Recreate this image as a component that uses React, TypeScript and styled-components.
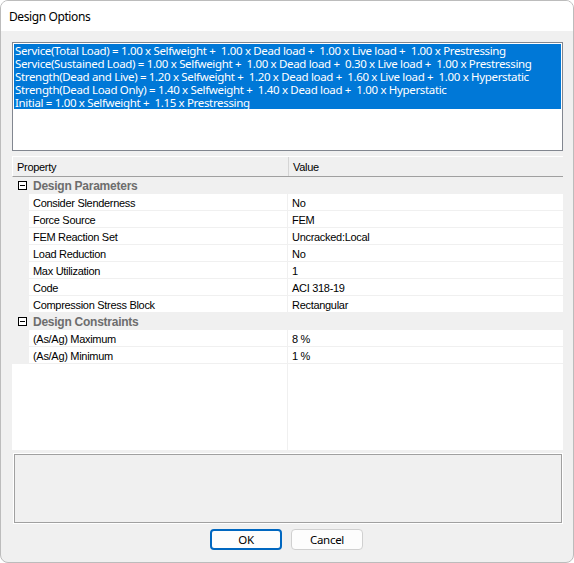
import React from "react";
import styled, { createGlobalStyle } from "styled-components";

const GlobalStyle = createGlobalStyle`
  html, body {
    margin: 0;
    padding: 0;
    background: #ffffff;
  }
  * {
    box-sizing: border-box;
  }
`;

const combos = [
  "Service(Total Load) = 1.00 x Selfweight +  1.00 x Dead load +  1.00 x Live load +  1.00 x Prestressing",
  "Service(Sustained Load) = 1.00 x Selfweight +  1.00 x Dead load +  0.30 x Live load +  1.00 x Prestressing",
  "Strength(Dead and Live) = 1.20 x Selfweight +  1.20 x Dead load +  1.60 x Live load +  1.00 x Hyperstatic",
  "Strength(Dead Load Only) = 1.40 x Selfweight +  1.40 x Dead load +  1.00 x Hyperstatic",
  "Initial = 1.00 x Selfweight +  1.15 x Prestressing",
];

const groups = [
  {
    title: "Design Parameters",
    props: [
      ["Consider Slenderness", "No"],
      ["Force Source", "FEM"],
      ["FEM Reaction Set", "Uncracked:Local"],
      ["Load Reduction", "No"],
      ["Max Utilization", "1"],
      ["Code", "ACI 318-19"],
      ["Compression Stress Block", "Rectangular"],
    ],
  },
  {
    title: "Design Constraints",
    props: [
      ["(As/Ag) Maximum", "8 %"],
      ["(As/Ag) Minimum", "1 %"],
    ],
  },
];

const Window = styled.div`
  width: 574px;
  height: 563px;
  border: 1px solid #bcbcbc;
  border-radius: 8px;
  overflow: hidden;
  background: #f0f0f0;
  display: flex;
  flex-direction: column;
  font-family: "Noto Sans", "Open Sans", sans-serif;
`;

const TitleBar = styled.div`
  height: 30px;
  flex: none;
  background: #ffffff;
  display: flex;
  align-items: center;
  padding-left: 8px;
  font-size: 12px;
  letter-spacing: -0.4px;
  color: #000;
`;

const Body = styled.div`
  flex: 1;
  display: flex;
  flex-direction: column;
  padding: 11px 10px 0 11px;
`;

const ListBox = styled.div`
  height: 109px;
  flex: none;
  border: 1px solid #828790;
  background: #ffffff;
  padding: 1px;
  overflow: hidden;
`;

const ListItem = styled.div<{ $selected?: boolean }>`
  height: 13px;
  line-height: 13px;
  padding-left: 1px;
  font-size: 11.5px;
  letter-spacing: -0.34px;
  white-space: pre;
  background: ${(p) => (p.$selected ? "#0078d7" : "transparent")};
  color: ${(p) => (p.$selected ? "#ffffff" : "#000000")};
`;

const Grid = styled.div`
  margin-top: 5px;
  height: 294px;
  flex: none;
  border-top: 1px solid #ffffff;
  background: #ffffff;
  display: flex;
  flex-direction: column;
  font-family: "Liberation Sans", Arial, sans-serif;
  font-size: 11px;
  letter-spacing: -0.3px;
  color: #000;
`;

const HeaderRow = styled.div`
  height: 20px;
  flex: none;
  display: grid;
  grid-template-columns: 276px 1fr;
  background: #f0f0f0;
  border-bottom: 1px solid #a0a0a0;
  border-left: 1px solid #ffffff;
`;

const HeaderCell = styled.div<{ $first?: boolean }>`
  display: flex;
  align-items: center;
  padding-left: 4px;
  border-right: ${(p) => (p.$first ? "1px solid #d5d5d5" : "none")};
`;

const CategoryRow = styled.div`
  height: 17px;
  flex: none;
  display: flex;
  align-items: center;
  background: #f0f0f0;
`;

const Expander = styled.div`
  width: 17px;
  height: 100%;
  display: flex;
  align-items: center;
  justify-content: center;
  padding-left: 3px;
`;

const CategoryTitle = styled.div`
  padding-left: 4px;
  font-weight: bold;
  font-size: 12px;
  letter-spacing: -0.25px;
  color: #6d6d6d;
`;

const PropRow = styled.div`
  height: 17px;
  flex: none;
  display: grid;
  grid-template-columns: 17px 259px 1fr;
`;

const Gutter = styled.div`
  background: #f0f0f0;
`;

const Cell = styled.div<{ $label?: boolean }>`
  display: flex;
  align-items: center;
  padding-left: 4px;
  padding-top: 1px;
  border-bottom: 1px solid #f0f0f0;
  border-right: ${(p) => (p.$label ? "1px solid #f0f0f0" : "none")};
  white-space: nowrap;
`;

const Filler = styled.div`
  flex: 1;
  display: grid;
  grid-template-columns: 276px 1fr;
`;

const FillerCol = styled.div`
  border-right: 1px solid #f0f0f0;
`;

const Description = styled.div`
  margin: 4px 1px 0 2px;
  height: 69px;
  flex: none;
  border: 1px solid #a0a0a0;
  box-shadow: 0 0 0 1px #ffffff;
  background: #f0f0f0;
`;

const ButtonBar = styled.div`
  display: flex;
  justify-content: center;
  gap: 9px;
  margin-top: 6px;
  padding-right: 2px;
`;

const Button = styled.button<{ $default?: boolean }>`
  width: 72px;
  height: 21px;
  padding: 0;
  border-radius: 4px;
  background: #fdfdfd;
  border: ${(p) => (p.$default ? "2px solid #0067c0" : "1px solid #d0d0d0")};
  font-family: "Noto Sans", "Open Sans", sans-serif;
  font-size: 11.5px;
  letter-spacing: -0.3px;
  color: #000;
  line-height: 1;
`;

const MinusBox = () => (
  <svg width="9" height="9" viewBox="0 0 9 9">
    <rect x="0.5" y="0.5" width="8" height="8" fill="#fff" stroke="#000" />
    <line x1="2" y1="4.5" x2="7" y2="4.5" stroke="#000" />
  </svg>
);

const App = () => {
  return (
    <>
      <GlobalStyle />
      <Window>
        <TitleBar>Design Options</TitleBar>
        <Body>
          <ListBox>
            {combos.map((c) => (
              <ListItem key={c} $selected>
                {c}
              </ListItem>
            ))}
          </ListBox>
          <Grid>
            <HeaderRow>
              <HeaderCell $first>Property</HeaderCell>
              <HeaderCell>Value</HeaderCell>
            </HeaderRow>
            {groups.map((g) => (
              <React.Fragment key={g.title}>
                <CategoryRow>
                  <Expander>
                    <MinusBox />
                  </Expander>
                  <CategoryTitle>{g.title}</CategoryTitle>
                </CategoryRow>
                {g.props.map(([name, value]) => (
                  <PropRow key={name}>
                    <Gutter />
                    <Cell $label>{name}</Cell>
                    <Cell>{value}</Cell>
                  </PropRow>
                ))}
              </React.Fragment>
            ))}
            <Filler>
              <FillerCol />
              <div />
            </Filler>
          </Grid>
          <Description />
          <ButtonBar>
            <Button $default>OK</Button>
            <Button>Cancel</Button>
          </ButtonBar>
        </Body>
      </Window>
    </>
  );
};

export default App;
